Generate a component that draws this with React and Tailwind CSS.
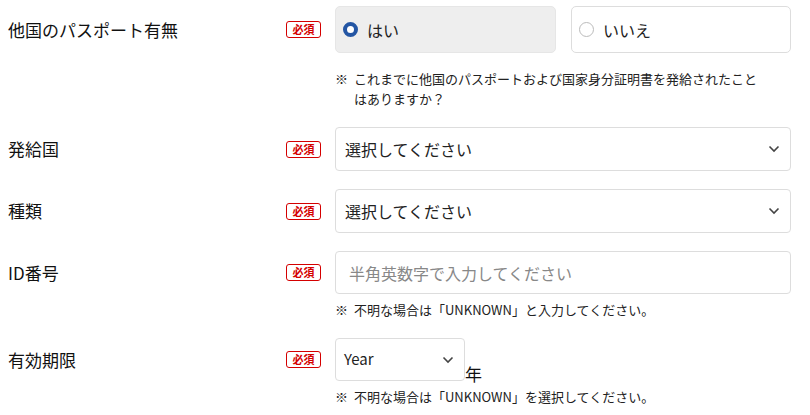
const Badge = () => (
  <div className="w-[49px] shrink-0 flex items-center">
    <span className="w-[35px] h-[17px] border border-[#d40000] rounded-[3px] text-[#d40000] text-[11px] font-bold leading-none flex items-center justify-center">
      必須
    </span>
  </div>
);

const Chevron = () => (
  <svg width="12" height="8" viewBox="0 0 12 8" fill="none">
    <path d="M1.5 1.5 L6 6 L10.5 1.5" stroke="#444" strokeWidth="1.6" />
  </svg>
);

const Label = ({ children, h }) => (
  <div className={`w-[286px] shrink-0 pl-2 flex items-center text-[17px] text-[#111] ${h}`}>
    {children}
  </div>
);

const Note = ({ children, className = '' }) => (
  <div className={`flex text-[13px] leading-5 text-[#222] ${className}`}>
    <span className="w-[19px] shrink-0">※</span>
    <span>{children}</span>
  </div>
);

const Select = ({ text }) => (
  <div className="w-[456px] h-[44px] border border-[#ddd] rounded-[4px] bg-white flex items-center justify-between pl-[9px] pr-[10px] text-[16px] text-[#222]">
    <span>{text}</span>
    <Chevron />
  </div>
);

export default function App() {
  return (
    <div className="w-[810px] h-[415px] bg-white pt-[6px] font-['Noto_Sans_CJK_JP',sans-serif] flex flex-col gap-[18px] overflow-hidden">
      <div className="flex">
        <Label h="h-[47px]">他国のパスポート有無</Label>
        <div className="flex flex-col">
          <div className="flex h-[47px]">
            <Badge />
            <div className="flex gap-[15px]">
              <div className="w-[221px] h-[47px] rounded-[5px] bg-[#eeeeee] border border-[#e6e6e6] flex items-center pl-[7px] gap-[9px] text-[16px] text-[#222]">
                <span className="w-[15px] h-[15px] rounded-full border-[4px] border-[#2456a4] bg-white" />
                はい
              </div>
              <div className="w-[220px] h-[47px] rounded-[5px] bg-white border border-[#ddd] flex items-center pl-[7px] gap-[9px] text-[16px] text-[#222]">
                <span className="w-[15px] h-[15px] rounded-full border border-[#bbb] bg-white" />
                いいえ
              </div>
            </div>
          </div>
          <Note className="ml-[49px] mt-[16px] w-[430px]">
            これまでに他国のパスポートおよび国家身分証明書を発給されたことはありますか？
          </Note>
        </div>
      </div>

      <div className="flex">
        <Label h="h-[44px]">発給国</Label>
        <Badge />
        <Select text="選択してください" />
      </div>

      <div className="flex">
        <Label h="h-[44px]">種類</Label>
        <Badge />
        <Select text="選択してください" />
      </div>

      <div className="flex">
        <Label h="h-[43px]">ID番号</Label>
        <div className="flex flex-col">
          <div className="flex">
            <Badge />
            <div className="w-[456px] h-[43px] border border-[#ddd] rounded-[4px] bg-white flex items-center pl-[13px] text-[16px] text-[#888]">
              半角英数字で入力してください
            </div>
          </div>
          <Note className="ml-[49px] mt-[6px]">不明な場合は「UNKNOWN」と入力してください。</Note>
        </div>
      </div>

      <div className="flex">
        <Label h="h-[43px]">有効期限</Label>
        <div className="flex flex-col">
          <div className="flex">
            <Badge />
            <div className="flex items-end">
              <div className="w-[130px] h-[43px] border border-[#ddd] rounded-[4px] bg-white flex items-center justify-between pl-[8px] pr-[10px] text-[15px] text-[#222]">
                <span>Year</span>
                <Chevron />
              </div>
              <span className="text-[17px] leading-none text-[#111] -mb-[1px]">年</span>
            </div>
          </div>
          <Note className="ml-[49px] mt-[6px]">不明な場合は「UNKNOWN」を選択してください。</Note>
        </div>
      </div>
    </div>
  );
}
